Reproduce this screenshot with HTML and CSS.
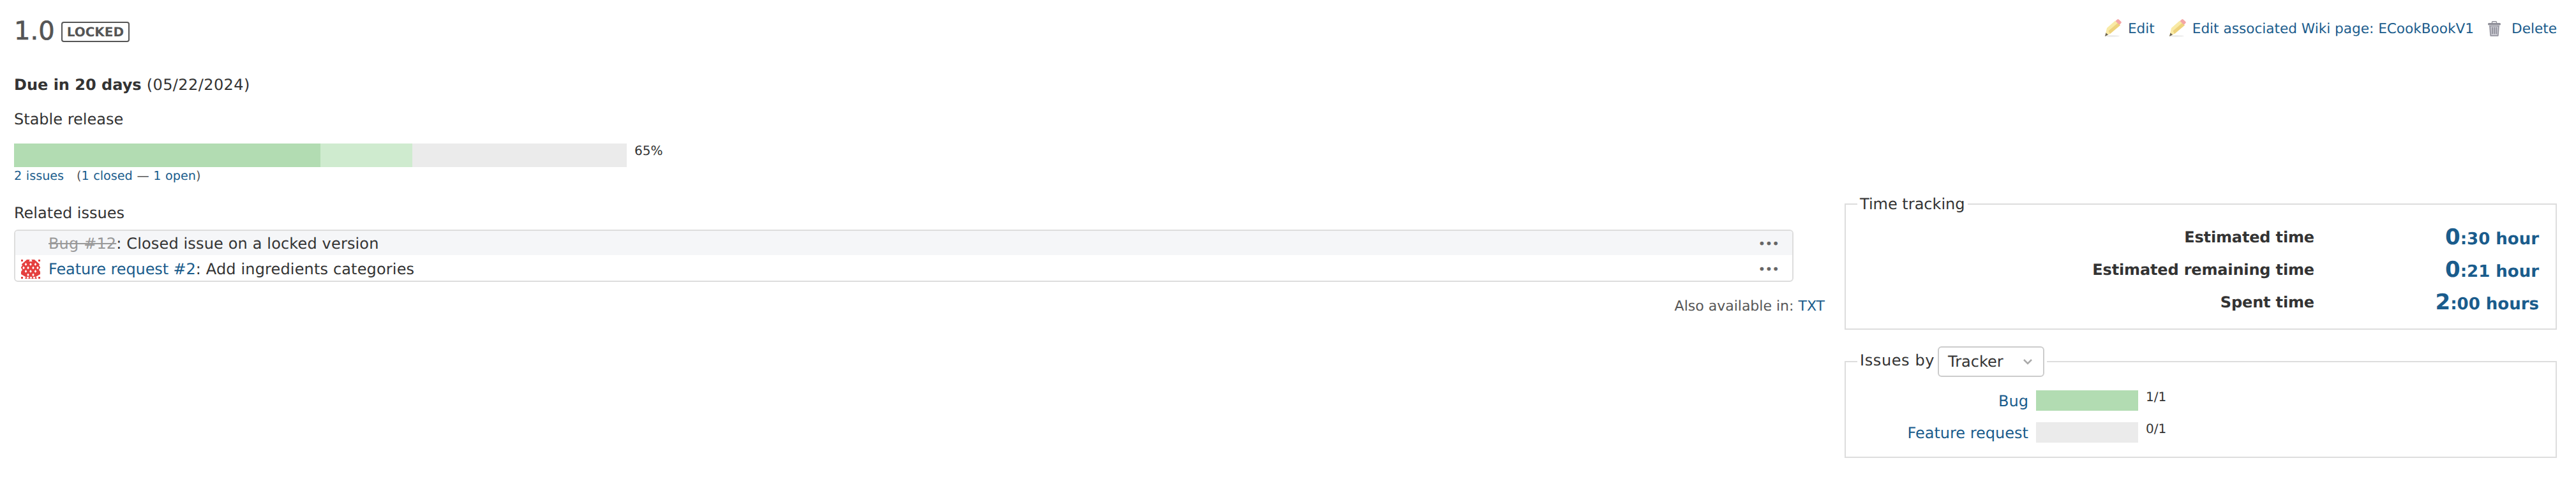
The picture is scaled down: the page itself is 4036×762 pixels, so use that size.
FILE: index.html
```html
<!DOCTYPE html>
<html lang="en">

<head>
    <meta charset="UTF-8">
    <title>1.0 - Roadmap</title>
    <link rel="stylesheet" href="styles.css">
</head>

<body>

    <div class="contextual">
        <a href="#" class="icon-link">
            <svg class="pencil" viewBox="0 0 28 28"><use href="#pencil-shape"></use></svg>
            Edit
        </a>
        <a href="#" class="icon-link">
            <svg class="pencil" viewBox="0 0 28 28"><use href="#pencil-shape"></use></svg>
            Edit associated Wiki page: ECookBookV1
        </a>
        <a href="#" class="icon-link">
            <svg class="trash" viewBox="0 0 22 24">
                <rect x="7.500" y="0.800" width="7" height="3" rx="1" fill="none" stroke="#8f8f99" stroke-width="1.400"/>
                <rect x="1" y="3" width="20" height="3.500" rx="1.500" fill="#8f8f99"/>
                <path d="M3 7h16l-1.200 15.500a1.500 1.500 0 0 1-1.500 1.500H5.700a1.500 1.500 0 0 1-1.500-1.500z" fill="#9d9da7"/>
                <path d="M5.500 8.500h11l-.8 13.500H6.300z" fill="#d2d2da"/>
                <path d="M8 9.500v11M11 9.500v11M14 9.500v11" stroke="#85858f" stroke-width="1.600"/>
            </svg>
            Delete
        </a>
    </div>

    <svg class="defs">
        <defs>
            <g id="pencil-shape">
                <ellipse cx="13" cy="26.500" rx="12" ry="1.500" fill="#ececec"/>
                <path d="M5 14L18 2.500l8 7L10 23l-8 4z" fill="#f9eaa6"/>
                <path d="M7.500 18.500L22 6l4 3.500L10 23z" fill="#eed27c"/>
                <path d="M18.500 3l2.500-2.300a2 2 0 0 1 2.800 0l3.300 3a2 2 0 0 1 0 2.800L24.500 9z" fill="#f4a6a6"/>
                <path d="M2 27l1.500-5.500 3.500 3z" fill="#6a6258"/>
            </g>
        </defs>
    </svg>

    <h2 class="version">1.0 <span class="badge">Locked</span></h2>

    <p class="due"><strong>Due in 20 days</strong> (05/22/2024)</p>
    <p class="description">Stable release</p>

    <div class="progress-row">
        <div class="bar"><span class="closed bar-closed"></span><span class="done bar-done"></span></div>
        <span class="percent">65%</span>
    </div>
    <p class="progress-info"><a href="#">2 issues</a> &nbsp; (<a href="#">1 closed</a> — <a href="#">1 open</a>)</p>

    <div class="split">
        <div class="split-left">
            <p class="related-title">Related issues</p>
            <div class="related">
                <div class="related-row odd">
                    <span class="tracker-icon"></span>
                    <span class="related-text"><a href="#" class="closed-link">Bug #12</a>: Closed issue on a locked version</span>
                    <span class="dots">•••</span>
                </div>
                <div class="related-row even">
                    <span class="tracker-icon">
                        <svg viewBox="0 0 32 32">
                            <g fill="#e5403f">
                                <path d="M1 9L8 3h16l7 6v15l-7 4H8l-7-4z"/>
                                <path d="M10 1h12l3 3H7z"/>
                                <path d="M1 1h3v3H1zM28 1h3v3h-3zM1 28h3v3H1zM28 28h3v3h-3z"/>
                                <path d="M7 31l2-4 2 4zM12 31l2-4 2 4zM17 31l2-4 2 4zM22 31l2-4 2 4z"/>
                            </g>
                            <g fill="#fff">
                                <path d="M15 0h2l1.500 4h-5z"/>
                                <path d="M1 7l2 3-2 3zM31 7l-2 3 2 3zM1 14l2 3-2 3zM31 14l-2 3 2 3z"/>
                                <path d="M8.500 6l1.800 2.400-1.800 2.400-1.800-2.400zM16 6l1.800 2.400-1.800 2.400-1.800-2.400zM23.500 6l1.800 2.400-1.800 2.400-1.800-2.400z"/>
                                <path d="M5 11.500l1.800 2.400-1.800 2.400-1.800-2.400zM12 11.500l1.800 2.400-1.800 2.400-1.800-2.400zM20 11.500l1.800 2.400-1.800 2.400-1.800-2.400zM27 11.500l1.800 2.400-1.800 2.400-1.800-2.400z"/>
                                <path d="M8.500 17l1.800 2.400-1.800 2.400-1.800-2.400zM16 17l1.800 2.400-1.800 2.400-1.800-2.400zM23.500 17l1.800 2.400-1.800 2.400-1.800-2.400z"/>
                                <path d="M12 22.500l1.800 2.400-1.800 2.400-1.800-2.400zM20 22.500l1.800 2.400-1.800 2.400-1.800-2.400z"/>
                            </g>
                        </svg>
                    </span>
                    <span class="related-text"><a href="#" class="tight">Feature request #2</a>: Add ingredients categories</span>
                    <span class="dots">•••</span>
                </div>
            </div>
            <p class="other-formats">Also available in: <a href="#">TXT</a></p>
        </div>

        <div class="split-right">
            <fieldset class="time-tracking">
                <legend>Time tracking</legend>
                <div class="time-row">
                    <span class="time-label">Estimated time</span>
                    <a href="#" class="time-value"><span class="hours-int">0</span>:30 hour</a>
                </div>
                <div class="time-row">
                    <span class="time-label">Estimated remaining time</span>
                    <a href="#" class="time-value"><span class="hours-int">0</span>:21 hour</a>
                </div>
                <div class="time-row">
                    <span class="time-label">Spent time</span>
                    <a href="#" class="time-value"><span class="hours-int">2</span>:00 hours</a>
                </div>
            </fieldset>

            <fieldset class="issues-by">
                <legend class="by-legend">
                    <span class="by-label">Issues by</span>
                    <span class="select">Tracker
                        <svg viewBox="0 0 16 10"><path d="M2 2l6 6 6-6" fill="none" stroke="#aaa" stroke-width="2.500"/></svg>
                    </span>
                </legend>
                <div class="by-row">
                    <a href="#" class="by-name">Bug</a>
                    <span class="by-bar bar-closed"></span>
                    <span class="by-count">1/1</span>
                </div>
                <div class="by-row">
                    <a href="#" class="by-name">Feature request</a>
                    <span class="by-bar"></span>
                    <span class="by-count">0/1</span>
                </div>
            </fieldset>
        </div>
    </div>

</body>

</html>
```

FILE: styles.css
```css
body {
    margin: 0;
    padding: 0 30px 0 22px;
    height: 762px;
    box-sizing: border-box;
    position: relative;
    overflow: hidden;
    background-color: #ffffff;
    font-family: "DejaVu Sans", sans-serif;
    font-size: 24px;
    color: #333333;
    text-rendering: geometricPrecision;
}

a {
    color: #1a5c8c;
    text-decoration: none;
}

p {
    margin: 0;
}

.defs {
    position: absolute;
    width: 0;
    height: 0;
}

/* barre d'actions */
.contextual {
    float: right;
    display: flex;
    gap: 21px;
    margin-top: 29px;
    font-size: 21.600px;
}

.icon-link {
    display: flex;
    align-items: center;
    gap: 10px;
    height: 32px;
}

.pencil {
    width: 28px;
    height: 28px;
    margin-bottom: 2px;
}

.trash {
    width: 22px;
    height: 24px;
    margin-right: 6px;
}

.version {
    display: flex;
    align-items: center;
    gap: 10px;
    margin: 0;
    padding-top: 24px;
    height: 50px;
    font-size: 40px;
    font-weight: normal;
    color: #555555;
    -webkit-text-stroke: 0.7px #555555;
}

.badge {
    margin-top: 2px;
    border: 2px solid #555555;
    border-radius: 4px;
    padding: 2px 7px;
    font-size: 20px;
    font-weight: bold;
    line-height: 24px;
    text-transform: uppercase;
    -webkit-text-stroke: 0;
}

.due {
    margin-top: 43px;
    line-height: 32px;
    letter-spacing: 0.42px;
}

.due strong {
    letter-spacing: 0;
}

.description {
    margin-top: 22px;
    line-height: 32px;
}

/* progression */
.progress-row {
    display: flex;
    gap: 12px;
    margin-top: 22px;
    font-size: 20px;
    line-height: 22px;
}

.bar {
    display: flex;
    width: 960px;
    height: 37px;
    background-color: #ebebeb;
}

.bar-closed {
    background-color: #b2dcb2;
}

.closed {
    width: 480px;
}

.done {
    width: 144px;
}

.bar-done {
    background-color: #cfebcf;
}

.progress-info {
    margin-top: 1px;
    font-size: 19.200px;
    word-spacing: 0.5px;
    line-height: 26px;
    color: #555555;
}

.split {
    display: flex;
    gap: 31px;
}

.split-left {
    flex: 1;
    padding-top: 29px;
}

.split-right {
    width: 1116px;
    padding-top: 17px;
}

.related-title {
    line-height: 32px;
}

.related {
    margin-top: 10px;
    margin-right: 49px;
    border: 2px solid #dddddd;
    border-radius: 6px;
    overflow: hidden;
}

.related-row {
    display: flex;
    align-items: center;
    box-sizing: border-box;
    height: 38px;
    padding: 2px 21px 0 8px;
}

.related-row.even {
    height: 40px;
    padding-top: 3px;
}

.odd {
    background-color: #f5f6f8;
}

.tracker-icon {
    display: flex;
    width: 32px;
    height: 32px;
    margin-right: 12px;
}

.tracker-icon svg {
    width: 32px;
    height: 32px;
}

.related-text {
    flex: 1;
    letter-spacing: 0.15px;
}

.tight {
    letter-spacing: -0.1px;
}

.closed-link {
    color: #999999;
    text-decoration: line-through;
}

.dots {
    font-size: 20px;
    letter-spacing: -1px;
    color: #666666;
}

.other-formats {
    margin-top: 24px;
    font-size: 22px;
    line-height: 30px;
    text-align: right;
    color: #555555;
}

/* encadres de droite */
fieldset {
    margin: 0;
    padding: 0;
    border: 2px solid #dddddd;
}

legend {
    margin-left: 18px;
    padding: 0 4px;
}

.time-tracking {
    height: 211px;
    box-sizing: border-box;
    padding-top: 12px;
}

.time-row {
    display: flex;
    justify-content: flex-end;
    align-items: center;
    height: 51px;
    padding-right: 26px;
}

.time-label {
    font-weight: bold;
    letter-spacing: -0.15px;
}

.time-value {
    width: 352px;
    text-align: right;
    font-weight: bold;
    font-size: 26px;
}

.hours-int {
    font-size: 34px;
}

.issues-by {
    margin-top: 26px;
    height: 175px;
    box-sizing: border-box;
    padding-top: 21px;
}

.by-legend {
    display: flex;
    align-items: center;
    gap: 5px;
}

.by-label {
    margin-bottom: 4px;
    letter-spacing: 0.6px;
}

.select {
    display: flex;
    align-items: center;
    justify-content: space-between;
    box-sizing: border-box;
    width: 167px;
    height: 48px;
    padding: 0 16px 0 14px;
    border: 2px solid #cccccc;
    border-radius: 6px;
    color: #333333;
}

.select svg {
    width: 16px;
    height: 10px;
}

.by-row {
    display: flex;
    gap: 12px;
    margin-bottom: 16px;
}

.by-name {
    width: 286px;
    text-align: right;
    line-height: 34px;
}

.by-bar {
    width: 160px;
    height: 32px;
    background-color: #ebebeb;
}

.by-bar.bar-closed {
    background-color: #b2dcb2;
}

.by-count {
    font-size: 20px;
    line-height: 20px;
}
```
